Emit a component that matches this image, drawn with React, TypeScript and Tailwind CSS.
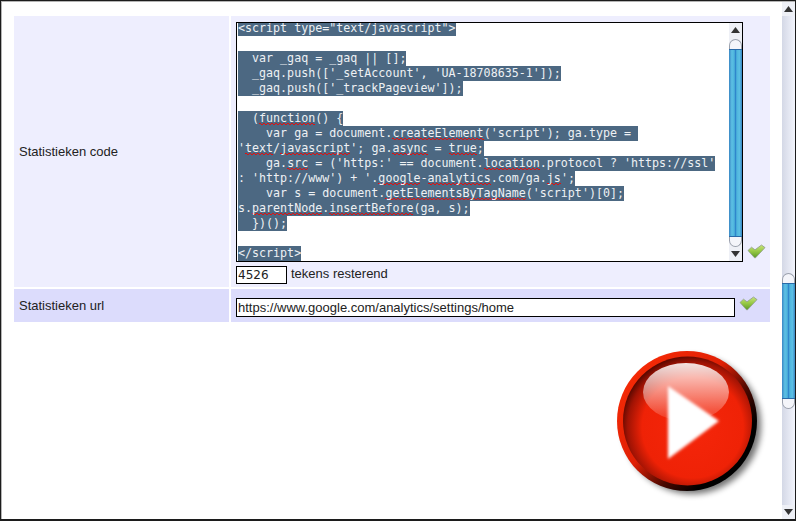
import React from 'react';

const mono = "[font-family:'DejaVu_Sans_Mono',monospace]";

// spelling squiggle from the browser's spellchecker
function S({ children }: { children: React.ReactNode }) {
    return (
        <span className="inline-block h-[15px] bg-[linear-gradient(to_top_right,transparent_35%,#e01010_35%,#e01010_65%,transparent_65%),linear-gradient(to_bottom_right,transparent_35%,#e01010_35%,#e01010_65%,transparent_65%)] bg-[size:4px_2px,4px_2px] bg-[position:0_12px,2px_12px] bg-repeat-x">
            {children}
        </span>
    );
}

const lines: React.ReactNode[] = [
    '<script type="text/javascript">',
    '',
    '  var _gaq = _gaq || [];',
    "  _gaq.push(['_setAccount', 'UA-18708635-1']);",
    "  _gaq.push(['_trackPageview']);",
    '',
    <>  (<S>function</S>() {'{'}</>,
    <>    var ga = document.<S>createElement</S>('script'); ga.type = </>,
    <>'<S>text</S>/<S>javascript</S>'; ga.<S>async</S> = <S>true</S>;</>,
    <>    ga.<S>src</S> = ('https:' == document.<S>location</S>.protocol ? 'https://ssl'</>,
    <>: 'http://www') + '.<S>google</S>-<S>analytics</S>.com/ga.<S>js</S>';</>,
    <>    var s = document.<S>getElementsByTagName</S>('script')[0];</>,
    <>s.<S>parentNode</S>.<S>insertBefore</S>(ga, s);</>,
    '  })();',
    '',
    '</script>',
];

function Arrow({ up }: { up?: boolean }) {
    return (
        <div className="h-[14px] flex items-center justify-center bg-[#eef0f6] shrink-0">
            <svg width="9" height="6" viewBox="0 0 9 6">
                <path d={up ? 'M4.5 0 L9 6 L0 6 Z' : 'M0 0 L9 0 L4.5 6 Z'} fill="#333" />
            </svg>
        </div>
    );
}

function Thumb() {
    return (
        <div className="flex-1 flex flex-col min-h-0">
            <div className="h-[10px] shrink-0 rounded-t-[7px] border border-b-0 border-[#9aa0ac] bg-[#f4f5fa]"></div>
            <div className="flex-1 border-y border-[#2a6aa8] bg-[linear-gradient(90deg,#3a86c4_0%,#5cc0e4_22%,#4eb4dc_40%,#2f86cc_50%,#4eb4dc_60%,#5cc0e4_80%,#3a86c4_100%)]"></div>
            <div className="h-[10px] shrink-0 rounded-b-[7px] border border-t-0 border-[#9aa0ac] bg-[#f4f5fa]"></div>
        </div>
    );
}

function Check() {
    return (
        <svg width="19" height="15" viewBox="0 0 19 15" className="shrink-0">
            <defs>
                <linearGradient id="chk" x1="0" y1="0" x2="0" y2="1">
                    <stop offset="0" stopColor="#c8e47c" />
                    <stop offset="0.5" stopColor="#96c844" />
                    <stop offset="1" stopColor="#5c9a28" />
                </linearGradient>
            </defs>
            <path d="M1 6.5 L4.5 3.2 L8 5.8 L14.5 1 L18 3.6 L8.5 13.8 L7.5 13.8 Z" fill="url(#chk)" stroke="#8f9c8a" strokeWidth="0.8" strokeLinejoin="round" />
        </svg>
    );
}

function PlayButton() {
    return (
        <svg width="160" height="160" viewBox="0 0 160 160" className="shrink-0">
            <defs>
                <linearGradient id="rim" x1="0.1" y1="0.15" x2="0.9" y2="0.85">
                    <stop offset="0" stopColor="#f52a06" />
                    <stop offset="0.42" stopColor="#e02005" />
                    <stop offset="0.66" stopColor="#4a0800" />
                    <stop offset="0.85" stopColor="#000" />
                </linearGradient>
                <radialGradient id="face" cx="0.54" cy="0.55" r="0.56">
                    <stop offset="0" stopColor="#f5260a" />
                    <stop offset="0.7" stopColor="#ef2206" />
                    <stop offset="0.9" stopColor="#a01304" />
                    <stop offset="1" stopColor="#5a0800" />
                </radialGradient>
                <linearGradient id="gloss" x1="0" y1="0" x2="0" y2="1">
                    <stop offset="0" stopColor="#fff" stopOpacity="0.88" />
                    <stop offset="1" stopColor="#fff" stopOpacity="0.08" />
                </linearGradient>
                <filter id="soft" x="-20%" y="-20%" width="140%" height="140%">
                    <feGaussianBlur stdDeviation="1.8" />
                </filter>
                <filter id="shade" x="-20%" y="-20%" width="140%" height="140%">
                    <feGaussianBlur stdDeviation="3" />
                </filter>
            </defs>
            <circle cx="82" cy="77" r="69" fill="#000" opacity="0.55" filter="url(#shade)" />
            <circle cx="77" cy="73" r="70" fill="url(#rim)" />
            <circle cx="77.5" cy="73" r="64.5" fill="url(#face)" />
            <ellipse cx="76" cy="44" rx="43" ry="29" fill="url(#gloss)" />
            <path d="M58 38 L109 73 L58 111 Z" fill="#fff" filter="url(#soft)" />
        </svg>
    );
}

export default function App() {
    return (
        <div className="w-[796px] h-[521px] bg-white overflow-hidden flex border-t border-l border-r border-b-2 border-[#1c1c1c] text-[13px] text-[#222] [font-family:'Liberation_Sans',sans-serif]">
            <div className="flex-1 min-w-0 flex border-t border-l border-[#b4b4b4]">
                <div className="flex-1 min-w-0 pl-3 pt-[14px]">
                    <div className="w-[756px] flex flex-col gap-[2px]">
                        {/* Code row */}
                        <div className="flex gap-[2px] h-[271px]">
                            <div className="w-[215px] bg-[#eeeefe] flex items-center pl-[5px]">Statistieken code</div>
                            <div className="flex-1 bg-[#eeeefe] pl-[5px] pt-[6px]">
                                <div className="flex items-end">
                                    <div className={`w-[507px] h-[240px] border border-black bg-white flex overflow-hidden ${mono}`}>
                                        <div className="flex-1 pl-px -mt-[2px] text-[11.67px] leading-[15px] text-[#eef1f4] whitespace-pre">
                                            {lines.map((line, i) => (
                                                <div key={i} className="h-[15px]">
                                                    {line !== '' && <span className="inline-block h-[15px] bg-[#4c6882]">{line}</span>}
                                                </div>
                                            ))}
                                        </div>
                                        <div className="w-[13px] flex flex-col bg-[#eef0f6]">
                                            <Arrow up />
                                            <div className="flex-1 pt-[2px] flex flex-col min-h-0">
                                                <Thumb />
                                            </div>
                                            <Arrow />
                                        </div>
                                    </div>
                                    <div className="ml-[4px] mb-[3px]"><Check /></div>
                                </div>
                                <div className="flex items-center mt-[2px]">
                                    <input readOnly value="4526" className="w-[51px] h-[18px] border border-black bg-white px-px text-[12px] text-[#222] outline-none [font-family:'DejaVu_Sans',sans-serif]" />
                                    <span className="ml-[4px] pb-[2px]">tekens resterend</span>
                                </div>
                            </div>
                        </div>
                        {/* Url row */}
                        <div className="flex gap-[2px] h-[33px]">
                            <div className="w-[215px] bg-[#dcdcfc] flex items-center pl-[5px]">Statistieken url</div>
                            <div className="flex-1 bg-[#dcdcfc] pl-[5px] flex items-start pt-[9px]">
                                <input readOnly value="https://www.google.com/analytics/settings/home" className="w-[499px] h-[19px] border border-black bg-white px-px text-[13px] text-[#222] outline-none [font-family:'Liberation_Sans',sans-serif]" />
                                <div className="ml-[4px] -mt-[2px]"><Check /></div>
                            </div>
                        </div>
                    </div>
                    <div className="w-[756px] flex justify-end mt-[26px]">
                        <PlayButton />
                    </div>
                </div>
                {/* Page scrollbar */}
                <div className="w-[13px] shrink-0 flex flex-col bg-[linear-gradient(90deg,#d4d8e6,#f2f4fc)]">
                    <Arrow up />
                    <div className="flex-1 flex flex-col pt-[257px] pb-[96px] min-h-0">
                        <Thumb />
                    </div>
                    <Arrow />
                </div>
            </div>
        </div>
    );
}
